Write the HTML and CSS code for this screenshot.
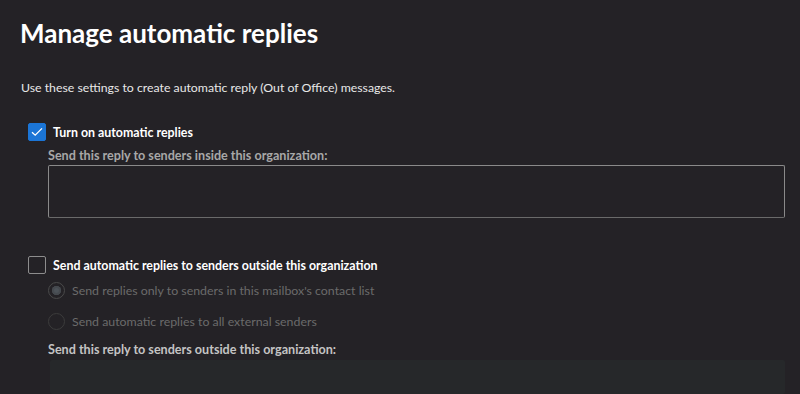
FILE: index.html
```html
<!DOCTYPE html>
<html lang="en">
<head>
    <meta charset="UTF-8">
    <title>Automatic replies</title>
    <link rel="stylesheet" href="styles.css">
</head>
<body>
    <div class="page">
        <h1 class="title">Manage automatic replies</h1>
        <p class="intro">Use these settings to create automatic reply (Out of Office) messages.</p>

        <div class="check_row">
            <span class="box checked">
                <svg width="12" height="10" viewBox="0 0 12 10"><path d="M1 5.2 L4.2 8.2 L11 1.4" fill="none" stroke="#fff" stroke-width="1.3"/></svg>
            </span>
            <span class="check_label">Turn on automatic replies</span>
        </div>
        <div class="group">
            <div class="field_label">Send this reply to senders inside this organization:</div>
            <div class="textbox"></div>
        </div>

        <div class="check_row second">
            <span class="box"></span>
            <span class="check_label">Send automatic replies to senders outside this organization</span>
        </div>
        <div class="group">
            <div class="radio_row">
                <span class="radio selected"></span>
                <span class="radio_label">Send replies only to senders in this mailbox's contact list</span>
            </div>
            <div class="radio_row">
                <span class="radio"></span>
                <span class="radio_label">Send automatic replies to all external senders</span>
            </div>
            <div class="field_label outside">Send this reply to senders outside this organization:</div>
            <div class="textbox disabled"></div>
        </div>
    </div>
</body>
</html>
```

FILE: styles.css
```css
* {
    box-sizing: border-box;
    font-family: Lato, sans-serif;
}
html, body {
    margin: 0;
    height: 100%;
    overflow: hidden;
}
body {
    background-color: #242226;
    color: #fff;
}
.page {
    padding: 15px 15px 0 20px;
}
.title {
    margin: 0;
    font-size: 26px;
    font-weight: 700;
    line-height: 36px;
}
.intro {
    margin: 28px 0 0 1px;
    font-size: 12.3px;
    line-height: 18px;
    color: #e8e8e8;
}
.check_row {
    display: flex;
    align-items: center;
    gap: 7px;
    margin: 26px 0 0 8px;
    height: 18px;
}
.check_row.second {
    margin-top: 38px;
}
.box {
    width: 18px;
    height: 18px;
    border: 1px solid #8d8d8d;
    border-radius: 2px;
    display: flex;
    align-items: center;
    justify-content: center;
}
.box.checked {
    background-color: #1b75d6;
    border-color: #1b75d6;
}
.check_label {
    font-size: 12.4px;
    font-weight: 700;
}
.group {
    margin-left: 28px;
}
.field_label {
    margin-top: 6px;
    font-size: 12.6px;
    font-weight: 700;
    color: #a8a8a8;
    line-height: 18px;
}
.field_label.outside {
    margin-top: 11px;
    color: #c4c4c4;
}
.textbox {
    height: 53px;
    border: 1px solid #8a8a8a;
    border-bottom-color: #6a6a6a;
    border-radius: 2px;
}
.textbox.disabled {
    margin: 1px 0 0 2px;
    height: 34px;
    border: none;
    background-color: #26282a;
}
.radio_row {
    display: flex;
    align-items: center;
    gap: 7px;
    height: 18px;
    margin-top: 7px;
}
.radio_row + .radio_row {
    margin-top: 13px;
}
.radio {
    width: 17px;
    height: 17px;
    border: 1px solid #3c3c3c;
    border-radius: 50%;
    display: flex;
    align-items: center;
    justify-content: center;
}
.radio.selected {
    border-color: #4a4a4a;
}
.radio.selected::after {
    content: "";
    width: 9px;
    height: 9px;
    border-radius: 50%;
    background-color: #4c5258;
    box-shadow: inset 0 0 0 2px #45494e;
}
.radio_label {
    font-size: 12.35px;
    color: #6b6b6b;
}
```
